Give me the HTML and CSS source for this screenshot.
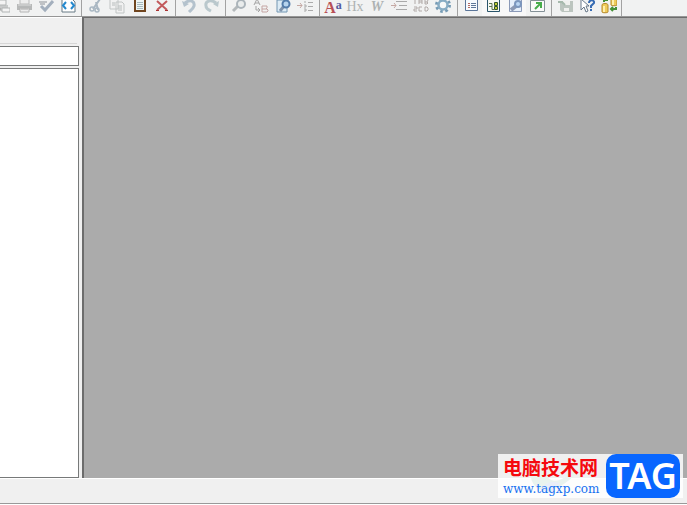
FILE: index.html
```
<!DOCTYPE html>
<html lang="zh-CN">
<head>
<meta charset="utf-8">
<title>Workspace</title>
<link rel="stylesheet" href="styles.css">
</head>
<body>
<header class="toolbar" role="toolbar" aria-label="Main toolbar">
  <div class="group">
    <button aria-label="Print preview"><svg viewBox="0 0 16 16"><path d="M1 7h13v6H1z" fill="#c8caca"/><path d="M4 2h8v5H4zM8 10h8v4H8z" fill="#f4f4f4" stroke="#b2b5b5"/><path d="M3 11h4" stroke="#999"/></svg></button>
    <button aria-label="Print"><svg viewBox="0 0 16 16"><path d="M4 1h9v5H4z" fill="#eee" stroke="#bbb"/><path d="M1 6h15v6H1z" fill="#b7b9b9"/><path d="M2 7h13" stroke="#ddd"/><path d="M4 10h9v4H4z" fill="#ededed" stroke="#b4b4b4"/><path d="M5 11h7" stroke="#aaa"/></svg></button>
    <button aria-label="Check spelling"><svg viewBox="0 0 16 16"><path d="M1 4h8M2 6h5" stroke="#bfc2c5" stroke-width="2"/><path d="M3 8l4 4 8-9" fill="none" stroke="#a3afbd" stroke-width="3"/></svg></button>
    <button aria-label="View source"><svg viewBox="0 0 16 16"><path d="M2 1h10l3 3v10H2z" fill="#fff" stroke="#687b85"/><path d="M6 4L3 7.500l3 3.500M11 4l3 3.500-3 3.500" fill="none" stroke="#2589ce" stroke-width="2"/></svg></button>
  </div>
  <div class="group">
    <button aria-label="Cut"><svg viewBox="0 0 16 16"><path d="M13 1L6 11M9 4l2 8" stroke="#a9b7c2" stroke-width="2"/><circle cx="5" cy="11" r="2" fill="none" stroke="#a9b7c2" stroke-width="1.500"/><circle cx="10" cy="12" r="2" fill="none" stroke="#a9b7c2" stroke-width="1.500"/></svg></button>
    <button aria-label="Copy"><svg viewBox="0 0 16 16"><path d="M1 1h8v10H1zM7 4h6l2 2v9H7z" fill="#f1f1f1" stroke="#c1c5c5"/><path d="M3 5h3M3 7h3M9 8h4M9 10h4M9 12h4" stroke="#b7bcbc"/></svg></button>
    <button aria-label="Paste"><svg viewBox="0 0 16 16"><path d="M4 1h10v12H4z" fill="#eef5f4" stroke="#70451f" stroke-width="2"/><path d="M6 4.500h6M6 6.500h6M6 8.500h6M6 10.500h6" stroke="#a7b9bd"/></svg></button>
    <button aria-label="Delete"><svg viewBox="0 0 16 16"><path d="M4 3l10 9M14 3L4 12" stroke="#c25a5c" stroke-width="2"/><path d="M3 12.500h3M12 12.500h3" stroke="#a33"/></svg></button>
  </div>
  <div class="group">
    <button aria-label="Undo"><svg viewBox="0 0 16 16"><path d="M4 5c5-4 10-2 9 3-1 3-3 4-5 6" fill="none" stroke="#b4c2cd" stroke-width="3"/><path d="M1 3l2 6 5-3z" fill="#b4c2cd"/></svg></button>
    <button aria-label="Redo"><svg viewBox="0 0 16 16"><path d="M13 5C8 1 2 3 3 8c0 3 3 4 5 5" fill="none" stroke="#bac8cd" stroke-width="3"/><path d="M16 3l-1 6-5-3z" fill="#bac8cd"/></svg></button>
  </div>
  <div class="group">
    <button aria-label="Find"><svg viewBox="0 0 16 16"><path d="M7 8l-5 5" stroke="#b4b9bb" stroke-width="3"/><circle cx="10" cy="6" r="4" fill="#e9ecec" stroke="#abb4ba" stroke-width="2"/></svg></button>
    <button aria-label="Replace"><svg viewBox="0 0 16 16"><path d="M1 7l3-6 3 6M2 5h4M3 8v4h4M5 10l2 2-2 2" fill="none" stroke="#a3a3a3"/><path d="M9 8v6h5l1-1v-1l-1-1H9M9 8h5v2l-1 1" fill="none" stroke="#c4a5a3"/></svg></button>
    <button aria-label="Edit document"><svg viewBox="0 0 16 16"><path d="M2 2h10v12H2z" fill="#dcebf5" stroke="#7296b2"/><path d="M9 8l-4 5" stroke="#7f93ab" stroke-width="3"/><circle cx="11" cy="6" r="3.500" fill="#b6d4ee" stroke="#537caa" stroke-width="2"/></svg></button>
    <button aria-label="Insert numbered list"><svg viewBox="0 0 16 16"><path d="M0 7.500h5M3 5l2 2.500L3 10" fill="none" stroke="#c5a8a3"/><path d="M8 3v2M7 7h2v2H7M7 11h2v2H7M11 4.500h5M11 8.500h5M11 12.500h5" fill="none" stroke="#aaa"/></svg></button>
  </div>
  <div class="group">
    <button class="serif" aria-label="Font"><span class="red">A</span><span class="blue">a</span></button>
    <button class="serif pale" aria-label="Heading">Hx</button>
    <button class="serif pale italic" aria-label="Word style">W</button>
    <button aria-label="Indent"><svg viewBox="0 0 16 16"><path d="M0 7.500h5M3 5l2 2.500L3 10" fill="none" stroke="#c5a8a3"/><path d="M5 3.500h11M8 7.500h8M5 11.500h11" stroke="#aaa"/></svg></button>
    <button aria-label="Numbering"><svg viewBox="0 0 16 16"><path d="M2 1v5M6 6V2h3v4M6 4h3M12 6V1h2l1 1-1 2h-2M14 4l1 1-1 1h-2M1 9h3v2H1v2h3M9 9H6v4h3M12 9v4h2l1-1v-2l-1-1z" fill="none" stroke="#b1aaa8"/></svg></button>
    <button aria-label="Settings"><svg viewBox="0 0 16 16"><circle cx="8" cy="7" r="6.500" fill="none" stroke="#759bb5" stroke-width="3" stroke-dasharray="2.500 2.600"/><circle cx="8" cy="7" r="4.500" fill="#f7f9f9" stroke="#88adc4" stroke-width="2.500"/></svg></button>
  </div>
  <div class="group">
    <button aria-label="List view"><svg viewBox="0 0 16 16"><path d="M2.500 1.500h12v11h-12z" fill="#f6faff" stroke="#5a7599"/><path d="M5 5.500h2M5 7.500h2M5 9.500h2" stroke="#b56a60"/><path d="M8 5.500h5M8 7.500h5M8 9.500h5" stroke="#5d7799"/></svg></button>
    <button class="selected" aria-label="Navigation view"><svg viewBox="0 0 16 16"><path d="M2.500 1.500h12v12h-12z" fill="#f7f9f3" stroke="#29546b"/><path d="M4 5.500h3v6h2M4 8.500h3" fill="none" stroke="#5b7450"/><path d="M9.500 4.500h3v3h-3zM9.500 8.500h3v3h-3z" fill="#c1cc31" stroke="#34552b"/></svg></button>
    <button class="selected" aria-label="Search pane"><svg viewBox="0 0 16 16"><path d="M2.500 1.500h12v12h-12z" fill="#e6effa" stroke="#8b9ab8"/><path d="M9 8l-5 4" stroke="#8b99b4" stroke-width="4"/><circle cx="11" cy="6" r="3" fill="#bad5f2" stroke="#7b96bd" stroke-width="2"/></svg></button>
    <button aria-label="Open in window"><svg viewBox="0 0 16 16"><path d="M1.500 2.500h14v11h-14z" fill="#fafafa" stroke="#839096"/><path d="M6 11l5-5M7 5h5v5" fill="none" stroke="#48ac4b" stroke-width="2"/></svg></button>
  </div>
  <div class="group">
    <button aria-label="Save output"><svg viewBox="0 0 16 16"><path d="M3 3h13v11H5l-2-2z" fill="#bcc5bf"/><path d="M6 3h7v4H6zM7 10h5v3H7z" fill="#f0f0ee"/><path d="M1 4h4l3 3" fill="none" stroke="#a6b9ac" stroke-width="2"/></svg></button>
    <button aria-label="Context help"><svg viewBox="0 0 16 16"><path d="M2 1v11l3-3 2 5 2-1-2-5h3z" fill="#fff" stroke="#687889"/><path d="M10 5c0-4 6-3 5 0l-3 3v2M12 11v2" fill="none" stroke="#376bb3" stroke-width="2"/></svg></button>
    <button aria-label="Synchronize"><svg viewBox="0 0 16 16"><path d="M1 7c0-2 6-2 6 0v7c0 1-6 1-6 0zM10 1h6v6c0 1-6 1-6 0z" fill="#f0cc5b" stroke="#b5892c"/><path d="M3 8v6M12 2v5" stroke="#fff0ac" stroke-width="2"/><path d="M15 9v2h-5M12 9l-2 2 2 2M3 4V2h4" fill="none" stroke="#459037" stroke-width="2"/></svg></button>
  </div>
</header>
<main class="workspace">
  <aside class="sidebar">
    <div class="caption"></div>
    <input type="text" aria-label="Keyword">
    <div class="list"></div>
  </aside>
  <section class="canvas" aria-label="Document area"></section>
</main>
<footer class="status"></footer>
<aside class="badge">
  <svg class="swirl" viewBox="0 0 60 34"><path d="M4 4C-1 38 34 35 57 2C35 20 22 26 17 7" fill="#e9f3ee"/><path d="M14 28c3-8 13-10 20-6-5 0-9 4-7 10" fill="#e8eef8"/></svg>
  <div class="site"><strong>电脑技术网</strong><a href="#">www.tagxp.com</a></div>
  <span class="tag">TAG</span>
</aside>
</body>
</html>
```

FILE: styles.css
```
* { box-sizing: border-box; }
body {
  display: flex;
  flex-direction: column;
  height: 100vh;
  margin: 0;
  padding-bottom: 1px;
  overflow: hidden;
  background: #fff;
  font-family: "Liberation Sans", sans-serif;
}
.toolbar {
  display: flex;
  align-items: flex-end;
  flex: none;
  height: 17px;
  overflow: hidden;
  background: #f1f2f2;
  border-bottom: 1px solid #969696;
}
.group {
  display: flex;
  flex: none;
  align-items: flex-end;
  height: 24px;
  padding-right: 3px;
  margin-right: 2px;
  border-right: 1px solid #a2a2a2;
}
.group:first-child { margin-left: -9px; padding-right: 2px; }
.group:last-child { padding-right: 1px; }
.toolbar button {
  display: flex;
  flex: none;
  justify-content: center;
  width: 22px;
  height: 22px;
  padding: 4px 0 2px;
  border: 0;
  background: transparent;
}
.toolbar button.selected { background: #f8f8f8; }
.toolbar svg { width: 16px; height: 16px; }
.toolbar button.serif {
  align-items: flex-start;
  height: 16px;
  padding: 0;
  font: 14px/14px "Liberation Serif", serif;
}
.toolbar .red {
  color: #b84f56;
  font-size: 16px;
  font-weight: bold;
  line-height: 16px;
}
.toolbar .blue {
  color: #535ba0;
  font-size: 12px;
  font-weight: bold;
  line-height: 10px;
}
.toolbar button.pale { color: #aeb2b2; }
.toolbar button.italic { font-style: italic; font-weight: bold; }
.workspace { display: flex; flex: 1; min-height: 0; }
.sidebar {
  display: flex;
  flex-direction: column;
  width: 82px;
  padding-right: 3px;
  background: #f0f0f0;
  border-top: 1px solid #fff;
}
.caption {
  height: 26px;
  margin: 0 2px 2px 0;
  border-bottom: 1px solid #d7d7d7;
}
.sidebar input {
  width: 100%;
  height: 20px;
  margin-bottom: 2px;
  padding: 0 4px;
  border: 1px solid #777979;
  border-left: 0;
  background: #fff;
}
.list {
  flex: 1;
  border: 1px solid #777979;
  border-left: 0;
  background: #fff;
}
.canvas {
  flex: 1;
  background: #ababab;
  border: solid #6c6c6c;
  border-width: 1px 0 0 2px;
}
.status {
  flex: none;
  height: 26px;
  background: #f0f0f0;
  border-top: 1px solid #fff;
  border-bottom: 1px solid #999;
}
.badge {
  position: absolute;
  right: 4px;
  bottom: 7px;
  display: flex;
  gap: 5px;
  padding: 0 3px 0 5px;
  background: rgba(255, 255, 255, 0.82);
}
.swirl { position: absolute; left: 29px; top: 8px; width: 60px; height: 34px; }
.site { position: relative; display: flex; flex-direction: column; width: 98px; }
.site strong {
  color: #f5090e;
  font: bold 19px/26px "Noto Sans CJK SC", sans-serif;
}
.site a {
  color: #1670f0;
  font: 12px/18px "DejaVu Serif", serif;
  text-decoration: none;
}
.tag {
  width: 74px;
  height: 44px;
  border-radius: 10px;
  background: #0866ff;
  color: #fff;
  font: 600 36px/44px "Noto Sans", sans-serif;
  text-align: center;
}
```
